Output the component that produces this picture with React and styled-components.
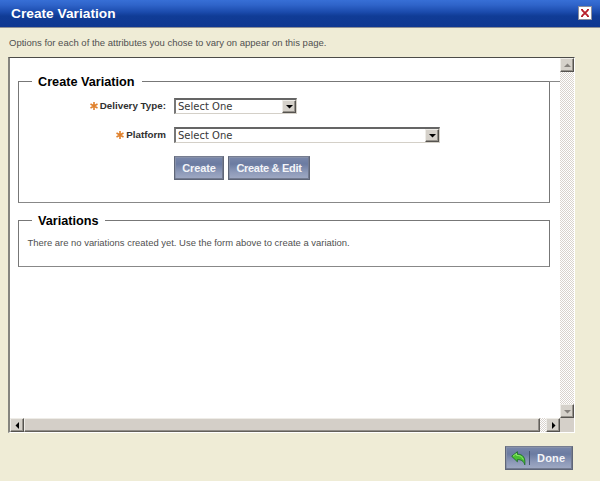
import React from 'react';
import styled, { createGlobalStyle } from 'styled-components';

const Global = createGlobalStyle`
  * { box-sizing: border-box; }
  body { margin: 0; background: #efecd6; font-family: "Liberation Sans", Arial, sans-serif; }
`;
const Page = styled.div`
  width: 600px; height: 481px; display: flex; flex-direction: column;
  background: #efecd6; color: #505050; overflow: hidden;
`;
const Header = styled.header`
  height: 28px; flex: none; display: flex; justify-content: space-between;
  padding: 6px 8px 0 11px; border-bottom: 1px solid #8c8f98;
  background: linear-gradient(#376fd6 0, #2f64c9 5px, #1b4bad 12px, #103c96 16px, #0f3791 27px);
`;
const Title = styled.h1`
  margin: 0; color: #fff; font-size: 13.7px; line-height: 15px; font-weight: bold;
  letter-spacing: 0.02px;
`;
const Close = styled.button`
  width: 14px; height: 14px; padding: 0; display: grid; place-items: center;
  background: #fff; border: 1px solid #8b8d9c;
`;
const Intro = styled.p`
  margin: 9px 0 0 9px; height: 20px; font-size: 9.5px; line-height: 12px; white-space: nowrap;
`;
const Frame = styled.section`
  width: 567px; height: 376px; margin-left: 8px; flex: none; display: grid;
  grid-template-columns: 1fr 14px; grid-template-rows: 1fr 14px;
  border: 1px solid #fff; border-top-color: #4b4b48; border-left: 2px solid #85857f;
`;
const Content = styled.div`
  background: #fff; padding: 16px 0 0 8px; min-width: 0;
`;
const Group = styled.fieldset`
  position: relative; width: 532px; height: ${p => p.$height}px; margin: 0 0 10px;
  padding: 0; border: 1px solid #777; border-bottom-color: #888; min-width: 0;
`;
const Legend = styled.legend`
  height: 15px; margin-left: 13px; padding: 1px 6px 0; width: ${p => p.$width}px; color: #000;
  font-size: 12.7px; line-height: 15px; font-weight: bold; white-space: nowrap;
`;
const Overhang = styled.i`
  position: absolute; top: -8px; right: -11px; width: 11px; height: 1px; background: #888;
`;
const Field = styled.div`
  display: grid; grid-template-columns: 147px auto; column-gap: 8px; justify-content: start;
  height: 16px; margin-top: ${p => p.$top}px;
`;
const Label = styled.label`
  display: flex; justify-content: flex-end; align-items: center; gap: 2px; height: 16px;
  color: #303030; font-size: 9.8px; line-height: 14px; font-weight: bold; white-space: nowrap;
`;
const Select = styled.div`
  width: ${p => p.$width}px; height: 16px; display: flex; justify-content: space-between;
  border: 1px solid #d4d0c8; border-top: 2px solid #656565; border-left: 2px solid #777;
  background: #fff; color: #383838; font: 10px/14px "DejaVu Sans", sans-serif;
  padding-left: 2px;
`;
const ArrowBox = styled.button`
  width: 14px; height: ${p => p.$h || 14}px; padding: 0; flex: none;
  display: grid; place-items: center; background: #d5d1ca;
  border: 1px solid #eeece7; border-right: 1px solid #55534f; border-bottom: 1px solid #55534f;
  box-shadow: inset -1px -1px #96928b;
`;
const Actions = styled.div`
  display: flex; gap: 4px; margin: 13px 0 0 155px;
`;
const Button = styled.button`
  width: ${p => p.$width}px; height: 24px; padding: ${p => p.$icon ? '0 5px' : '0'};
  display: flex; align-items: center; justify-content: ${p => p.$icon ? 'flex-start' : 'center'};
  color: #f3f4f8; border: 1px solid #5f6678; border-top-color: #767d90;
  box-shadow: inset -1px -1px #737b91, inset 1px 1px #8791aa;
  background: linear-gradient(#7987aa 0, #6b7ba1 7px, #8d99b8 15px, #a0aac4 100%);
  font: bold 11px/14px "Liberation Sans", Arial, sans-serif; white-space: nowrap;
  letter-spacing: ${p => p.$spacing};
`;
const Divider = styled.span`
  width: 1px; height: 14px; background: #465370; margin: 0 7px 0 3px; flex: none;
`;
const Empty = styled.p`
  margin: 8px 0 0 8.5px; font-size: 9.45px; line-height: 14px; white-space: nowrap;
`;
const Vertical = styled.div`
  display: flex; flex-direction: column; justify-content: space-between;
  background: repeating-conic-gradient(#fff 0 25%, #d9d3cd 0 50%) 0 0 / 2px 2px;
`;
const Horizontal = styled.div`
  display: flex;
  background: repeating-conic-gradient(#fff 0 25%, #d9d3cd 0 50%) 0 0 / 2px 2px;
`;
const Thumb = styled.div`
  width: 516px; height: 14px; margin-right: auto; background: #d4cfc8;
  border: 1px solid #eeece7; border-right-color: #625f5a; border-bottom-color: #625f5a;
  box-shadow: inset -1px -1px #918d88;
`;
const Corner = styled.div`background: #d5d0c9;`;
const Footer = styled.footer`
  display: flex; justify-content: flex-end; padding: 13px 27px 0 0;
`;
const BackIcon = styled.svg`flex: none;`;

const shapes = {
  down: 'M0 2H7L3.5 5.5Z', up: 'M0 5H7L3.5 1.5Z',
  left: 'M5 0V7L1.5 3.5Z', right: 'M2 0V7L5.5 3.5Z',
};
const Arrow = ({ dir, color = '#000' }) => (
  <svg width="7" height="7" viewBox="0 0 7 7"><path d={shapes[dir]} fill={color} /></svg>
);
const Required = () => (
  <svg width="8" height="8" viewBox="0 0 8 8">
    <path d="M4 0V8M.5 2L7.5 6M7.5 2L.5 6" stroke="#e0812c" strokeWidth="1.6" />
  </svg>
);
const Choice = ({ width }) => (
  <Select $width={width}><span>Select One</span><ArrowBox $h={13}><Arrow dir="down" /></ArrowBox></Select>
);

export default function App() {
  return (
    <Page>
      <Global />
      <Header>
        <Title>Create Variation</Title>
        <Close aria-label="Close">
          <svg width="10" height="10" viewBox="0 0 10 10">
            <path d="M1.8 1.8L8.2 8.2M8.2 1.8L1.8 8.2" stroke="#b8202c" strokeWidth="1.9" />
            <path d="M1 1.5h2M7 1.5h2M1 8.5h2M7 8.5h2" stroke="#b8202c" />
          </svg>
        </Close>
      </Header>
      <Intro>Options for each of the attributes you chose to vary on appear on this page.</Intro>
      <Frame>
        <Content>
          <Group $height={129}>
            <Legend $width={110}>Create Variation</Legend>
            <Overhang />
            <Field $top={9}>
              <Label><Required />Delivery Type:</Label><Choice width={123} />
            </Field>
            <Field $top={13}>
              <Label><Required />Platform</Label><Choice width={266} />
            </Field>
            <Actions>
              <Button $width={50} $spacing="-0.1px">Create</Button>
              <Button $width={82} $spacing="-0.3px">Create &amp; Edit</Button>
            </Actions>
          </Group>
          <Group $height={54}>
            <Legend $width={73}>Variations</Legend>
            <Empty>There are no variations created yet. Use the form above to create a variation.</Empty>
          </Group>
        </Content>
        <Vertical>
          <ArrowBox aria-label="Scroll up"><Arrow dir="up" color="#85817c" /></ArrowBox>
          <ArrowBox aria-label="Scroll down"><Arrow dir="down" color="#85817c" /></ArrowBox>
        </Vertical>
        <Horizontal>
          <ArrowBox aria-label="Scroll left"><Arrow dir="left" /></ArrowBox>
          <Thumb />
          <ArrowBox aria-label="Scroll right"><Arrow dir="right" /></ArrowBox>
        </Horizontal>
        <Corner />
      </Frame>
      <Footer>
        <Button $width={68} $icon $spacing="0.2px">
          <BackIcon width="15" height="15" viewBox="0 0 15 15">
            <path d="M.7 5.3L6.4.7V3.2C11.7 3.2 14.7 6.3 13.8 13.8C12.6 10 10.3 8.5 6.4 8.6V10.8Z" fill="#4ac032" stroke="#176a22" strokeWidth=".8" />
            <path d="M2 5.2L5.5 2.5V4.4C9 4.3 11.2 5.5 12.4 8.5" fill="none" stroke="#8ee96b" />
          </BackIcon>
          <Divider />Done
        </Button>
      </Footer>
    </Page>
  );
}
